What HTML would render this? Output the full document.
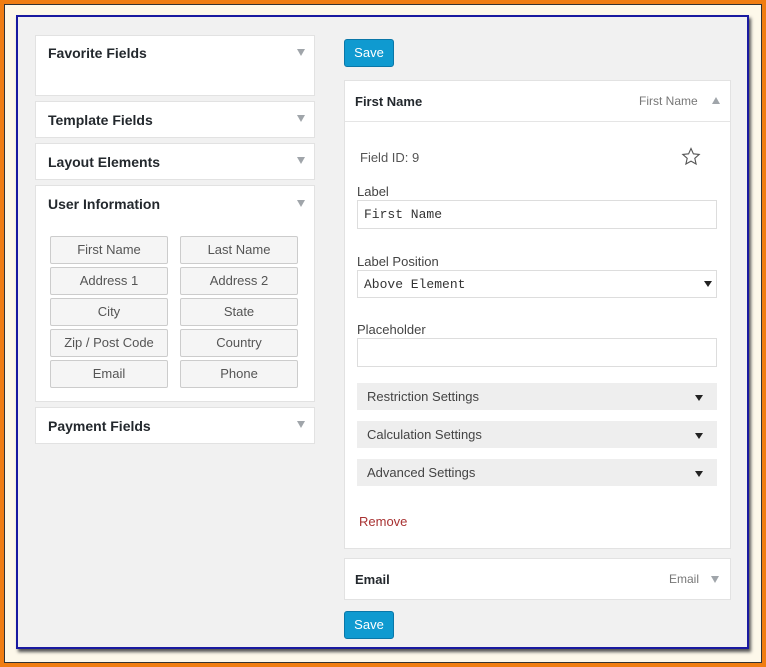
<!DOCTYPE html>
<html><head><style>
*{box-sizing:border-box;margin:0;padding:0}
body{width:766px;height:667px;background:#fdf8ea;position:relative;overflow:hidden;font-family:"Liberation Sans",sans-serif;color:#23282d}
.orange{position:absolute;left:0;top:0;width:766px;height:667px;border:4px solid #f07d12;box-shadow:inset 0 0 0 1px #333}
.blue{position:absolute;left:16px;top:15px;width:733px;height:634px;border:2px solid #1a1aa0;background:#f1f1f1;box-shadow:2px 3px 3px #555}
.a{position:absolute}
.panel{position:absolute;background:#fff;border:1px solid #e2e2e2}
.ph{position:absolute;left:12px;font-size:14px;font-weight:bold;color:#23282d}
.tri{position:absolute;width:0;height:0;border-left:4px solid transparent;border-right:4px solid transparent;border-top:7px solid #a0a5aa}
.btn{position:absolute;width:118px;height:28px;border:1px solid #ccc;background:#f5f5f5;border-radius:2px;font-size:13px;color:#555;text-align:center;line-height:26px}
.save{position:absolute;width:50px;height:28px;background:#0f9ad0;border:1px solid #0a77a8;border-radius:3px;color:#fff;font-size:13px;text-align:center;line-height:26px}
.lbl{position:absolute;left:357px;font-size:13px;color:#444}
.inp{position:absolute;left:357px;width:360px;height:29px;border:1px solid #ddd;background:#fff;font-family:"Liberation Mono",monospace;font-size:13px;padding-left:6px;line-height:27px;color:#333}
.bar{position:absolute;left:357px;width:360px;height:27px;background:#eee;font-size:13px;color:#444;padding-left:10px;line-height:27px}
.dt{position:absolute;right:14px;top:12px;width:0;height:0;border-left:4px solid transparent;border-right:4px solid transparent;border-top:6px solid #222}
</style></head><body>
<div class="orange"></div>
<div class="blue"></div>

<div class="panel" style="left:35px;top:35px;width:280px;height:61px"><div class="ph" style="top:9px">Favorite Fields</div><div class="tri" style="left:261px;top:13px"></div></div>
<div class="panel" style="left:35px;top:101px;width:280px;height:37px"><div class="ph" style="top:10px">Template Fields</div><div class="tri" style="left:261px;top:13px"></div></div>
<div class="panel" style="left:35px;top:143px;width:280px;height:37px"><div class="ph" style="top:10px">Layout Elements</div><div class="tri" style="left:261px;top:13px"></div></div>
<div class="panel" style="left:35px;top:185px;width:280px;height:217px"><div class="ph" style="top:10px">User Information</div><div class="tri" style="left:261px;top:14px"></div></div>
<div class="panel" style="left:35px;top:407px;width:280px;height:37px"><div class="ph" style="top:10px">Payment Fields</div><div class="tri" style="left:261px;top:13px"></div></div>

<div class="btn" style="left:50px;top:236px">First Name</div><div class="btn" style="left:180px;top:236px">Last Name</div>
<div class="btn" style="left:50px;top:267px">Address 1</div><div class="btn" style="left:180px;top:267px">Address 2</div>
<div class="btn" style="left:50px;top:298px">City</div><div class="btn" style="left:180px;top:298px">State</div>
<div class="btn" style="left:50px;top:329px">Zip / Post Code</div><div class="btn" style="left:180px;top:329px">Country</div>
<div class="btn" style="left:50px;top:360px">Email</div><div class="btn" style="left:180px;top:360px">Phone</div>

<div class="save" style="left:344px;top:39px">Save</div>

<div class="panel" style="left:344px;top:80px;width:387px;height:469px"></div>
<div class="a" style="left:345px;top:121px;width:385px;height:1px;background:#e5e5e5"></div>
<div class="a" style="left:355px;top:94px;font-size:13px;font-weight:bold">First Name</div>
<div class="a" style="left:639px;top:94px;font-size:12px;color:#777">First Name</div>
<div class="a" style="left:712px;top:97px;width:0;height:0;border-left:4px solid transparent;border-right:4px solid transparent;border-bottom:7px solid #a0a5aa"></div>
<div class="a" style="left:360px;top:150px;font-size:13px;color:#555">Field ID: 9</div>
<svg class="a" style="left:681px;top:147px" width="20" height="19" viewBox="0 0 20 19"><path d="M10 1.5l2.4 5.3 5.8.6-4.4 3.9 1.3 5.7L10 14.1l-5.1 2.9 1.3-5.7L1.8 7.4l5.8-.6z" fill="none" stroke="#555" stroke-width="1.1"/></svg>
<div class="lbl" style="top:184px">Label</div>
<div class="inp" style="top:200px">First Name</div>
<div class="lbl" style="top:254px">Label Position</div>
<div class="inp" style="top:270px;height:28px">Above Element<div class="dt" style="right:4px;top:10px"></div></div>
<div class="lbl" style="top:322px">Placeholder</div>
<div class="inp" style="top:338px"></div>
<div class="bar" style="top:383px">Restriction Settings<div class="dt"></div></div>
<div class="bar" style="top:421px">Calculation Settings<div class="dt"></div></div>
<div class="bar" style="top:459px">Advanced Settings<div class="dt"></div></div>
<div class="a" style="left:359px;top:514px;font-size:13px;color:#a83232">Remove</div>

<div class="panel" style="left:344px;top:558px;width:387px;height:42px"><div class="a" style="left:10px;top:13px;font-size:13px;font-weight:bold">Email</div><div class="a" style="left:324px;top:13px;font-size:12px;color:#777">Email</div><div class="tri" style="left:366px;top:17px"></div></div>

<div class="save" style="left:344px;top:611px">Save</div>
</body></html>
